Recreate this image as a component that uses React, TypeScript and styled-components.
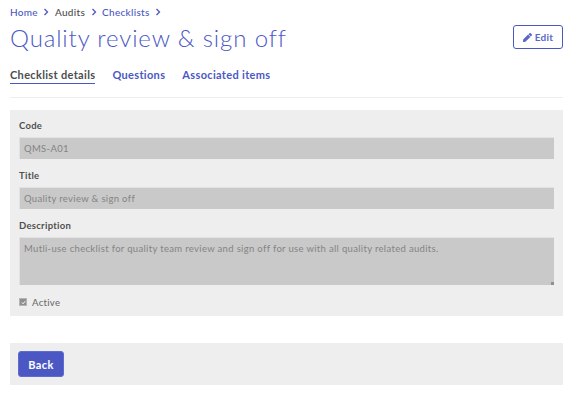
import React from 'react'
import styled, { createGlobalStyle } from 'styled-components'

const GlobalStyle = createGlobalStyle`
  html, body {
    margin: 0;
    background: #fff;
  }
  body {
    font-family: Lato, "Open Sans", sans-serif;
    color: #4a4a4a;
  }
`

const Page = styled.div`
  width: 553px;
  height: 400px;
  padding: 0 12px 0 10px;
  overflow: hidden;
`

const Crumbs = styled.nav`
  display: flex;
  align-items: center;
  height: 11px;
  padding-top: 6px;
  font-size: 10px;
  font-weight: 500;
  letter-spacing: 0.3px;
`

const Crumb = styled.a<{ $current?: boolean }>`
  color: ${p => (p.$current ? '#4d4d4d' : '#4b58c4')};
  white-space: nowrap;
`

const Chevron = styled.svg`
  width: 6px;
  height: 8px;
  margin: 0 5.5px;
  fill: none;
  stroke: #4b58c4;
  stroke-width: 1.3;
`

const Header = styled.header`
  display: flex;
  justify-content: space-between;
  align-items: center;
  height: 26px;
  margin-top: 7px;
`

const Title = styled.h1`
  margin: 0;
  font-size: 24px;
  font-weight: 300;
  letter-spacing: 0.87px;
  color: #4b58c4;
  white-space: nowrap;
`

const EditButton = styled.button`
  display: flex;
  align-items: center;
  justify-content: center;
  gap: 3px;
  box-sizing: border-box;
  width: 50px;
  height: 24px;
  padding: 0;
  background: #fff;
  border: 1.5px solid #4b58c4;
  border-radius: 3px;
  color: #5c67c8;
  font-family: inherit;
  font-size: 10px;
  font-weight: 700;
  letter-spacing: 0.3px;
`

const Tabs = styled.div`
  display: flex;
  gap: 17px;
  margin-top: 18px;
  padding-bottom: 13px;
  border-bottom: 1px solid #eeeeee;
`

const Tab = styled.a<{ $active?: boolean }>`
  box-sizing: border-box;
  height: 16px;
  font-size: 11px;
  font-weight: 700;
  line-height: 13px;
  letter-spacing: 0.33px;
  white-space: nowrap;
  color: ${p => (p.$active ? '#4d4d4d' : '#4b58c4')};
  border-bottom: ${p => (p.$active ? '1px solid #4b58c4' : 'none')};
`

const Panel = styled.section`
  margin-top: 12px;
  padding: 10px 9px 8px 9px;
  background: #eeeeee;
`

const Label = styled.label`
  display: block;
  height: 12px;
  margin-bottom: 5px;
  font-size: 9.5px;
  font-weight: 700;
  line-height: 12px;
  letter-spacing: 0.28px;
  color: #505050;
`

const Input = styled.div`
  box-sizing: border-box;
  height: 22px;
  margin-bottom: 11px;
  padding: 0 4px;
  background: #c9c9c9;
  border: 1px solid #e2e2e2;
  border-width: 1px 0 0 1px;
  font-size: 9.5px;
  line-height: 21px;
  letter-spacing: 0.33px;
  color: #848484;
`

const TextArea = styled(Input)`
  position: relative;
  height: 48px;
  margin-bottom: 0;
  line-height: 22px;
`

const Grip = styled.i`
  position: absolute;
  right: 0;
  bottom: 0;
  width: 3px;
  height: 3px;
  background: #8f8f8f;
`

const CheckRow = styled.div`
  display: flex;
  align-items: center;
  gap: 5px;
  height: 12px;
  margin-top: 11px;
  font-size: 9.5px;
  font-weight: 500;
  letter-spacing: 0.3px;
  color: #6d6d6d;
`

const Check = styled.span`
  display: flex;
  align-items: center;
  justify-content: center;
  box-sizing: border-box;
  width: 8px;
  height: 8px;
  background: #8e8e8e;
  border: 0.5px solid #b5b5b5;
`

const Footer = styled.section`
  margin-top: 27px;
  padding: 8px;
  background: #eeeeee;
`

const BackButton = styled.button`
  display: block;
  box-sizing: border-box;
  width: 46px;
  height: 26px;
  padding: 0;
  background: #4b58c4;
  border: 1px solid #5f6bd0;
  border-radius: 3px;
  color: #fff;
  font-family: inherit;
  font-size: 11px;
  font-weight: 700;
  letter-spacing: 0.4px;
`

const PencilIcon = () => (
  <svg width="9" height="9" viewBox="0 0 512 512" fill="#5c67c8">
    <path d="M290 92l130 130-282 282-116 13c-15 2-28-11-26-26l13-116zM500 73l-61-61c-19-19-50-19-69 0l-57 57 130 130 57-57c19-19 19-50 0-69z" />
  </svg>
)

const CrumbChevron = () => (
  <Chevron viewBox="0 0 6 8"><path d="M1.5 1l3 3-3 3" /></Chevron>
)

export default function App() {
  return (
    <>
      <GlobalStyle />
      <Page>
        <Crumbs>
          <Crumb>Home</Crumb>
          <CrumbChevron />
          <Crumb $current>Audits</Crumb>
          <CrumbChevron />
          <Crumb>Checklists</Crumb>
          <CrumbChevron />
        </Crumbs>
        <Header>
          <Title>Quality review &amp; sign off</Title>
          <EditButton><PencilIcon />Edit</EditButton>
        </Header>
        <Tabs>
          <Tab $active>Checklist details</Tab>
          <Tab>Questions</Tab>
          <Tab>Associated items</Tab>
        </Tabs>
        <Panel>
          <Label>Code</Label>
          <Input>QMS-A01</Input>
          <Label>Title</Label>
          <Input>Quality review &amp; sign off</Input>
          <Label>Description</Label>
          <TextArea>
            Mutli-use checklist for quality team review and sign off for use with all quality related audits.
            <Grip />
          </TextArea>
          <CheckRow>
            <Check>
              <svg width="5" height="5" viewBox="0 0 6 6" fill="none" stroke="#fff" strokeWidth="1.2"><path d="M1 3l1.5 1.5L5 1.5" /></svg>
            </Check>
            Active
          </CheckRow>
        </Panel>
        <Footer>
          <BackButton>Back</BackButton>
        </Footer>
      </Page>
    </>
  )
}
